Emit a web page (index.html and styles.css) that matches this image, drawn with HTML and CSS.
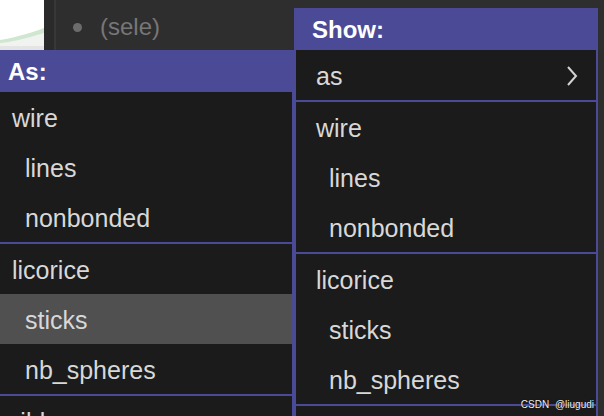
FILE: index.html
```html
<!DOCTYPE html>
<html>
<head>
<meta charset="utf-8">
<link rel="stylesheet" href="styles.css">
</head>
<body>
<div class="screen">
  <div class="backdrop">
    <div class="thumb">
      <svg width="44" height="50" viewBox="0 0 44 50">
        <rect width="44" height="50" fill="#ffffff"/>
        <path d="M0 41 C12 39 28 35 44 29 L44 46 L0 46 Z" fill="#f1f3f1"/>
        <path d="M0 40 C12 38 28 34 44 28 L44 33 C28 38 12 42 0 43 Z" fill="#cfe6cf"/>
        <rect y="46" width="44" height="4" fill="#e4e4e4"/>
      </svg>
    </div>
    <div class="gutter"></div>
    <div class="divider"></div>
    <div class="panel">
      <span class="dot"></span>
      <span class="sel">(sele)</span>
    </div>
  </div>

  <div class="menu menu-as">
    <div class="menu-head">As:</div>
    <div class="item group">wire</div>
    <div class="item sub">lines</div>
    <div class="item sub">nonbonded</div>
    <div class="sep"></div>
    <div class="item group">licorice</div>
    <div class="item sub active">sticks</div>
    <div class="item sub">nb_spheres</div>
    <div class="sep"></div>
    <div class="item group">ribbon</div>
  </div>

  <div class="menu menu-show">
    <div class="menu-head">Show:</div>
    <div class="item group submenu">
      <span>as</span>
      <svg class="chev" width="12" height="22" viewBox="0 0 12 22">
        <polyline points="2,2 10,11 2,20" fill="none" stroke="#d4d4d4" stroke-width="2"/>
      </svg>
    </div>
    <div class="sep"></div>
    <div class="item group">wire</div>
    <div class="item sub">lines</div>
    <div class="item sub">nonbonded</div>
    <div class="sep"></div>
    <div class="item group">licorice</div>
    <div class="item sub">sticks</div>
    <div class="item sub">nb_spheres</div>
    <div class="sep"></div>
  </div>

  <div class="watermark">CSDN @liugudi</div>
</div>
</body>
</html>
```
FILE: styles.css
```css
* { box-sizing: border-box; }
html, body { margin: 0; padding: 0; }
body { background: #2d2d2d; }

.screen {
  position: relative;
  width: 604px;
  height: 416px;
  overflow: hidden;
  background: #2d2d2d;
  font-family: "Liberation Sans", Arial, sans-serif;
}

.backdrop {
  display: flex;
  height: 50px;
}
.thumb { width: 44px; height: 50px; }
.thumb svg { display: block; }
.gutter { width: 10px; background: #2a2a2a; }
.divider { width: 2px; background: #383838; }
.panel {
  flex: 1;
  display: flex;
  align-items: center;
  padding-left: 17px;
  padding-top: 4px;
  background: #2e2e2e;
}
.dot {
  width: 9px;
  height: 9px;
  border-radius: 50%;
  background: #6c6c6c;
  margin-right: 18px;
}
.sel {
  font-size: 24px;
  color: #777777;
}

.menu {
  position: absolute;
  width: 304px;
  background: #1b1b1b;
  border-left: 2px solid #4b4a96;
  border-right: 2px solid #4b4a96;
  color: #d8d8d8;
  font-size: 25px;
}
.menu-as { left: -10px; top: 50px; height: 380px; }
.menu-show { left: 294px; top: 8px; height: 420px; }

.menu-head {
  height: 42px;
  background: #4b4a96;
  color: #ffffff;
  font-weight: bold;
  font-size: 24px;
  display: flex;
  align-items: center;
  padding-left: 16px;
  padding-top: 1px;
}

.item {
  height: 50px;
  display: flex;
  align-items: center;
  padding-top: 2px;
  white-space: nowrap;
}
.group { padding-left: 20px; }
.sub { padding-left: 33px; }
.active { background: #505050; }

.submenu { justify-content: space-between; padding-right: 18px; }
.chev { display: block; }

.sep {
  height: 2px;
  background: #4b4a96;
}

.watermark {
  position: absolute;
  right: 10px;
  bottom: 6px;
  font-size: 10px;
  word-spacing: 3px;
  color: #f0f0f0;
  text-shadow: 0 0 1px #000;
}
```
